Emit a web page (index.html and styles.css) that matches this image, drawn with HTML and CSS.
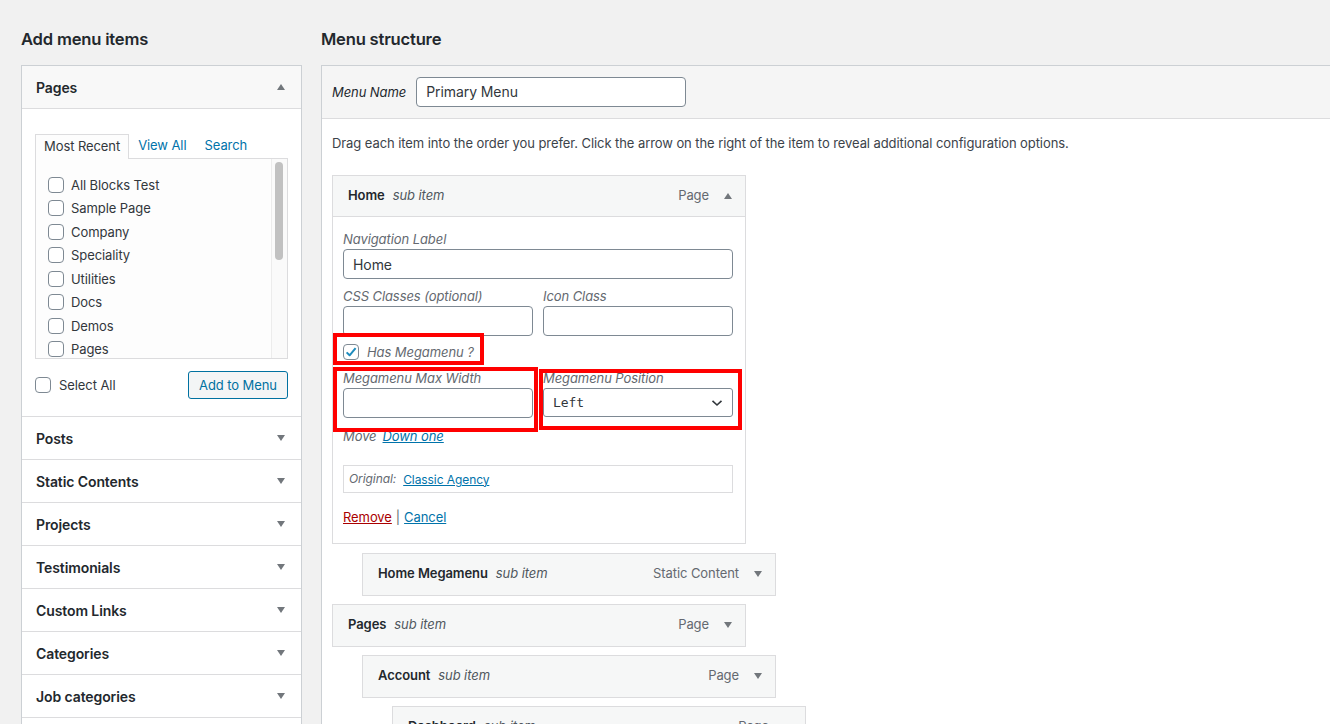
FILE: index.html
```html
<!DOCTYPE html>
<html lang="en">
<head>
<meta charset="utf-8">
<title>Menus</title>
<link rel="stylesheet" href="styles.css">
</head>
<body>
<div class="page">
  <div class="col-left">
    <h2 class="heading">Add menu items</h2>
    <div class="accordion">
      <div class="acc-section open">
        <div class="acc-title"><span>Pages</span><span class="tri up"></span></div>
        <div class="acc-content">
          <div class="tabs">
            <span class="tab active">Most Recent</span>
            <span class="tab link">View All</span>
            <span class="tab link">Search</span>
          </div>
          <div class="listbox">
            <ul class="checklist">
              <li><span class="cb"></span>All Blocks Test</li>
              <li><span class="cb"></span>Sample Page</li>
              <li><span class="cb"></span>Company</li>
              <li><span class="cb"></span>Speciality</li>
              <li><span class="cb"></span>Utilities</li>
              <li><span class="cb"></span>Docs</li>
              <li><span class="cb"></span>Demos</li>
              <li><span class="cb"></span>Pages</li>
            </ul>
            <div class="scrolltrack"><div class="thumb"></div></div>
          </div>
          <div class="submit-row">
            <label class="selall"><span class="cb"></span>Select All</label>
            <span class="btn">Add to Menu</span>
          </div>
        </div>
      </div>
      <div class="acc-section"><div class="acc-title"><span>Posts</span><span class="tri"></span></div></div>
      <div class="acc-section"><div class="acc-title"><span>Static Contents</span><span class="tri"></span></div></div>
      <div class="acc-section"><div class="acc-title"><span>Projects</span><span class="tri"></span></div></div>
      <div class="acc-section"><div class="acc-title"><span>Testimonials</span><span class="tri"></span></div></div>
      <div class="acc-section"><div class="acc-title"><span>Custom Links</span><span class="tri"></span></div></div>
      <div class="acc-section"><div class="acc-title"><span>Categories</span><span class="tri"></span></div></div>
      <div class="acc-section"><div class="acc-title"><span>Job categories</span><span class="tri"></span></div></div>
      <div class="acc-section"><div class="acc-title"></div></div>
    </div>
  </div>

  <div class="col-right">
    <h2 class="heading">Menu structure</h2>
    <div class="menu-edit">
      <div class="menu-header">
        <span class="menu-name-label">Menu Name</span>
        <span class="text-input name-input">Primary Menu</span>
      </div>
      <div class="menu-body">
        <p class="drag-hint">Drag each item into the order you prefer. Click the arrow on the right of the item to reveal additional configuration options.</p>

        <div class="menu-item depth0 expanded">
          <div class="item-bar">
            <span class="item-title"><b>Home</b><i>sub item</i></span>
            <span class="item-controls"><span class="item-type">Page</span><span class="tri up"></span></span>
          </div>
          <div class="item-settings">
            <div class="field">
              <span class="flabel">Navigation Label</span>
              <span class="text-input wide">Home</span>
            </div>
            <div class="field-row">
              <div class="field">
                <span class="flabel">CSS Classes (optional)</span>
                <span class="text-input half"></span>
              </div>
              <div class="field">
                <span class="flabel">Icon Class</span>
                <span class="text-input half"></span>
              </div>
            </div>
            <div class="check-row"><span class="cb checked"><svg width="12" height="12" viewBox="0 0 12 12"><path d="M1.6 6.4 L4.6 9.3 L10.6 2.2" fill="none" stroke="#1e8cbe" stroke-width="2" stroke-linejoin="round"/></svg></span><span class="flabel inl">Has Megamenu ?</span></div>
            <div class="field-row mm">
              <div class="field">
                <span class="flabel">Megamenu Max Width</span>
                <span class="text-input half"></span>
              </div>
              <div class="field">
                <span class="flabel">Megamenu Position</span>
                <span class="select half"><span>Left</span><svg width="12" height="8" viewBox="0 0 12 8"><path d="M1.5 1.8 L6 6 L10.5 1.8" fill="none" stroke="#32373c" stroke-width="1.6"/></svg></span>
              </div>
            </div>
            <div class="move-row"><span class="flabel inl">Move</span><a class="lnk it">Down one</a></div>
            <div class="original"><span class="flabel inl">Original:</span><a class="lnk">Classic Agency</a></div>
            <div class="actions"><a class="lnk red">Remove</a><span class="sep">|</span><a class="lnk">Cancel</a></div>

            <div class="hl hl1"></div>
            <div class="hl hl2"></div>
            <div class="hl hl3"></div>
          </div>
        </div>

        <div class="menu-item depth1 first-after">
          <div class="item-bar">
            <span class="item-title"><b>Home Megamenu</b><i>sub item</i></span>
            <span class="item-controls"><span class="item-type">Static Content</span><span class="tri"></span></span>
          </div>
        </div>
        <div class="menu-item depth0">
          <div class="item-bar">
            <span class="item-title"><b>Pages</b><i>sub item</i></span>
            <span class="item-controls"><span class="item-type">Page</span><span class="tri"></span></span>
          </div>
        </div>
        <div class="menu-item depth1">
          <div class="item-bar">
            <span class="item-title"><b>Account</b><i>sub item</i></span>
            <span class="item-controls"><span class="item-type">Page</span><span class="tri"></span></span>
          </div>
        </div>
        <div class="menu-item depth2">
          <div class="item-bar">
            <span class="item-title"><b>Dashboard</b><i>sub item</i></span>
            <span class="item-controls"><span class="item-type">Page</span><span class="tri"></span></span>
          </div>
        </div>
      </div>
    </div>
  </div>
</div>
</body>
</html>
```
FILE: styles.css
```css
*{box-sizing:border-box;}
html,body{margin:0;padding:0;}
body{
  background:#f1f1f1;
  font-family:Inter,"Open Sans",sans-serif;
  font-size:13px;
  letter-spacing:-0.08px;
  color:#444;
  overflow:hidden;
  height:724px;
}
.page{
  display:flex;
  gap:19px;
  padding-left:21px;
}
.heading{
  margin:0;
  height:65px;
  padding-top:29px;
  font-size:16.6px;
  line-height:20px;
  font-weight:600;
  color:#23282d;
  letter-spacing:-0.2px;
}
.col-left{width:281px;flex:none;}
.col-right{flex:1;margin-right:-40px;}

/* accordion */
.accordion{
  background:#fff;
  border:1px solid #ccd0d4;
  border-bottom:none;
}
.acc-section{border-bottom:1px solid #dcdcde;}
.acc-title{
  height:42px;
  display:flex;
  align-items:center;
  justify-content:space-between;
  padding:0 16px 0 14px;
  font-size:14px;
  font-weight:600;
  color:#23282d;
  letter-spacing:-0.1px;
}
.acc-section.open .acc-title{background:#f8f8f8;border-bottom:1px solid #dcdcde;height:43px;}
.tri{
  width:0;height:0;
  border-left:4.5px solid transparent;
  border-right:4.5px solid transparent;
  border-top:6px solid #72777c;
}
.tri.up{border-top:none;border-bottom:6px solid #72777c;}
.acc-content{padding:25px 13px 0 13px;height:307px;}
.tabs{display:flex;height:24px;align-items:stretch;}
.tab{padding:0 8px 0 8px;line-height:23px;}
.tab.active{
  background:#fdfdfd;
  border:1px solid #dcdcde;
  border-bottom:none;
  color:#32373c;
  position:relative;
  z-index:1;
  height:25px;
  padding:0 8px 0 8px;
}
.tab.link{color:#0073aa;padding:0 9px 0 9px;}
.listbox{
  height:201px;
  border:1px solid #dcdcde;
  background:#fdfdfd;
  display:flex;
}
.checklist{
  list-style:none;
  margin:0;
  padding:14px 0 0 12px;
  flex:1;
  overflow:hidden;
}
.checklist li{
  height:23.5px;
  display:flex;
  align-items:center;
  gap:7px;
  color:#32373c;
}
.cb{
  width:16px;height:16px;flex:none;
  border:1px solid #7e8993;
  border-radius:4px;
  background:#fff;
  display:inline-flex;
  align-items:center;
  justify-content:center;
}
.scrolltrack{
  width:16px;
  border-left:1px solid #ececec;
  background:#fafafa;
  padding:3px 3px 0 3px;
}
.thumb{width:8px;height:98px;border-radius:4px;background:#c1c1c1;}
.submit-row{
  display:flex;
  justify-content:space-between;
  align-items:center;
  margin-top:12px;
}
.selall{display:flex;align-items:center;gap:8px;color:#32373c;}
.btn{
  height:28px;
  width:100px;
  display:inline-flex;
  align-items:center;
  justify-content:center;
  border:1px solid #0071a1;
  border-radius:3px;
  background:#f3f5f6;
  color:#0071a1;
  font-size:13px;
}

/* right */
.menu-edit{
  background:#fff;
  border:1px solid #ccd0d4;
  height:700px;
}
.menu-header{
  background:#f5f5f5;
  border-bottom:1px solid #dcdcde;
  height:53px;
  display:flex;
  align-items:center;
  padding-left:10px;
  gap:10px;
}
.menu-name-label{font-style:italic;color:#23282d;}
.text-input{
  display:flex;
  align-items:center;
  height:30px;
  border:1px solid #7e8993;
  border-radius:4px;
  background:#fff;
  padding:0 9px;
  color:#32373c;
  font-size:14px;
}
.name-input{width:270px;margin-top:-1px;}
.menu-body{padding:0 10px;}
.drag-hint{margin:0;padding-top:15px;line-height:18px;color:#3c434a;}
.menu-item{width:414px;margin-top:8px;}
.menu-item.depth0.expanded{margin-top:23px;}
.menu-item.depth1{margin-left:30px;}
.menu-item.first-after{margin-top:9px;}
.menu-item.depth2{margin-left:60px;}
.item-bar{
  height:43px;
  border:1px solid #dcdcde;
  background:#f6f7f7;
  display:flex;
  align-items:center;
  justify-content:space-between;
  padding:0 13px 3px 15px;
}
.expanded .item-bar{height:42px;padding-bottom:2px;}
.item-title b{font-weight:600;color:#23282d;}
.item-title i{color:#50575e;margin-left:8px;}
.item-controls{display:flex;align-items:center;gap:15px;color:#646970;}
.item-controls .tri{margin-top:2px;}
.item-settings{
  position:relative;
  border:1px solid #dcdcde;
  border-top:none;
  padding:13px 10px 0 10px;
  height:327px;
}
.field{display:flex;flex-direction:column;}
.flabel{font-style:italic;color:#646970;line-height:18px;height:19px;}
.flabel.inl{height:auto;}
.wide{width:390px;height:30px;}
.half{width:190px;height:30px;}
.field-row{display:flex;gap:10px;margin-top:8px;}
.check-row{display:flex;align-items:center;gap:8px;margin-top:8px;height:16px;}
.cb.checked svg{display:block;}
.field-row.mm{margin-top:9px;}
.select{
  display:flex;
  align-items:center;
  justify-content:space-between;
  border:1px solid #7e8993;
  border-radius:3px;
  background:#fff;
  padding:0 9px 0 9px;
  font-family:"DejaVu Sans Mono",monospace;
  font-size:13px;
  color:#32373c;
  height:29px;
}
.move-row{display:flex;gap:6px;margin-top:9px;line-height:18px;}
.lnk{color:#0073aa;text-decoration:underline;}
.lnk.it{font-style:italic;}
.lnk.red{color:#a00;}
.original{
  margin-top:20px;
  width:390px;
  height:28px;
  border:1px solid #dcdcde;
  display:flex;
  align-items:center;
  gap:7px;
  padding-left:5px;
  font-size:12px;
}
.actions{margin-top:15px;display:flex;gap:4px;line-height:18px;}
.sep{color:#646970;}
.hl{position:absolute;border:4px solid #f00;}
.hl1{left:0;top:116px;width:151px;height:32px;}
.hl2{left:0;top:150px;width:205px;height:65px;}
.hl3{left:206px;top:152px;width:203px;height:61px;}
```
